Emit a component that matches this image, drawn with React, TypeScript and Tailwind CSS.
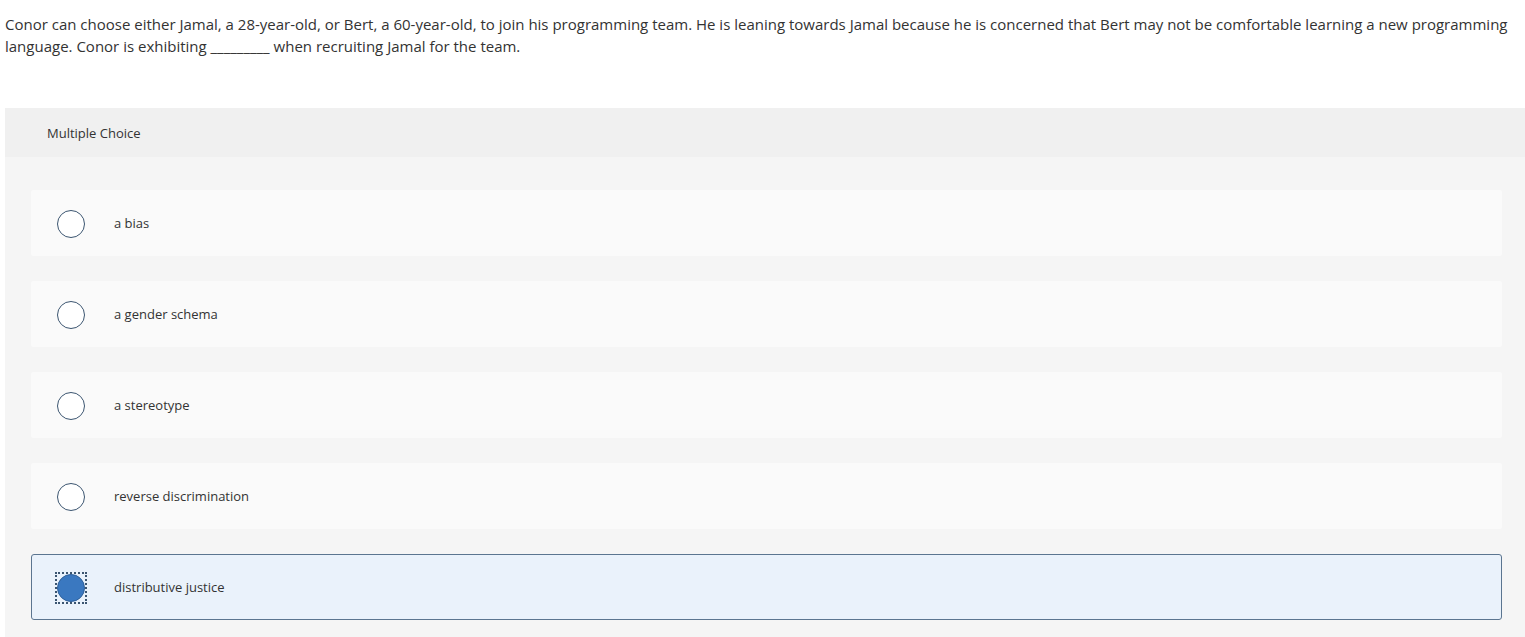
const options = [
  "a bias",
  "a gender schema",
  "a stereotype",
  "reverse discrimination",
  "distributive justice",
];

const selected = 4;

export default function App() {
  return (
    <div
      className="min-h-screen bg-white text-[#333]"
      style={{ fontFamily: "'Open Sans', 'Liberation Sans', sans-serif" }}
    >
      <p className="pl-[5px] pr-[4px] pt-[13px] text-[15px] leading-[22px]">
        Conor can choose either Jamal, a 28-year-old, or Bert, a 60-year-old, to join his programming team. He is leaning
        towards Jamal because he is concerned that Bert may not be comfortable learning a new programming language. Conor
        is exhibiting _________ when recruiting Jamal for the team.
      </p>

      <div className="ml-[5px] mt-[51px]">
        <div className="flex h-[49px] items-center bg-[#f0f0f0] pl-[42px] pt-[3px] text-[13px] text-[#333]">
          Multiple Choice
        </div>
        <div className="flex flex-col gap-[25px] bg-[#f5f5f5] pb-[20px] pl-[26px] pr-[23px] pt-[33px]">
          {options.map((opt, i) => {
            const on = i === selected;
            return (
              <div
                key={opt}
                className={
                  on
                    ? "flex h-[66px] items-center rounded-[3px] border border-[#5b7590] bg-[#eaf2fb] pl-[23px] pt-[1px]"
                    : "flex h-[66px] items-center rounded-[2px] bg-[#fafafa] pl-[24px] pt-[1px]"
                }
              >
                {on ? (
                  <span className="flex h-[32px] w-[32px] items-center justify-center border-2 border-dotted border-[#3b5570]">
                    <span className="h-[28px] w-[28px] rounded-full border border-[#2d5f99] bg-[#3a78c0]" />
                  </span>
                ) : (
                  <span className="ml-[2px] mr-[2px] h-[28px] w-[28px] rounded-full border-[1.5px] border-[#3b5570] bg-white" />
                )}
                <span className="ml-[27px] text-[13px] text-[#333]">{opt}</span>
              </div>
            );
          })}
        </div>
      </div>
    </div>
  );
}
